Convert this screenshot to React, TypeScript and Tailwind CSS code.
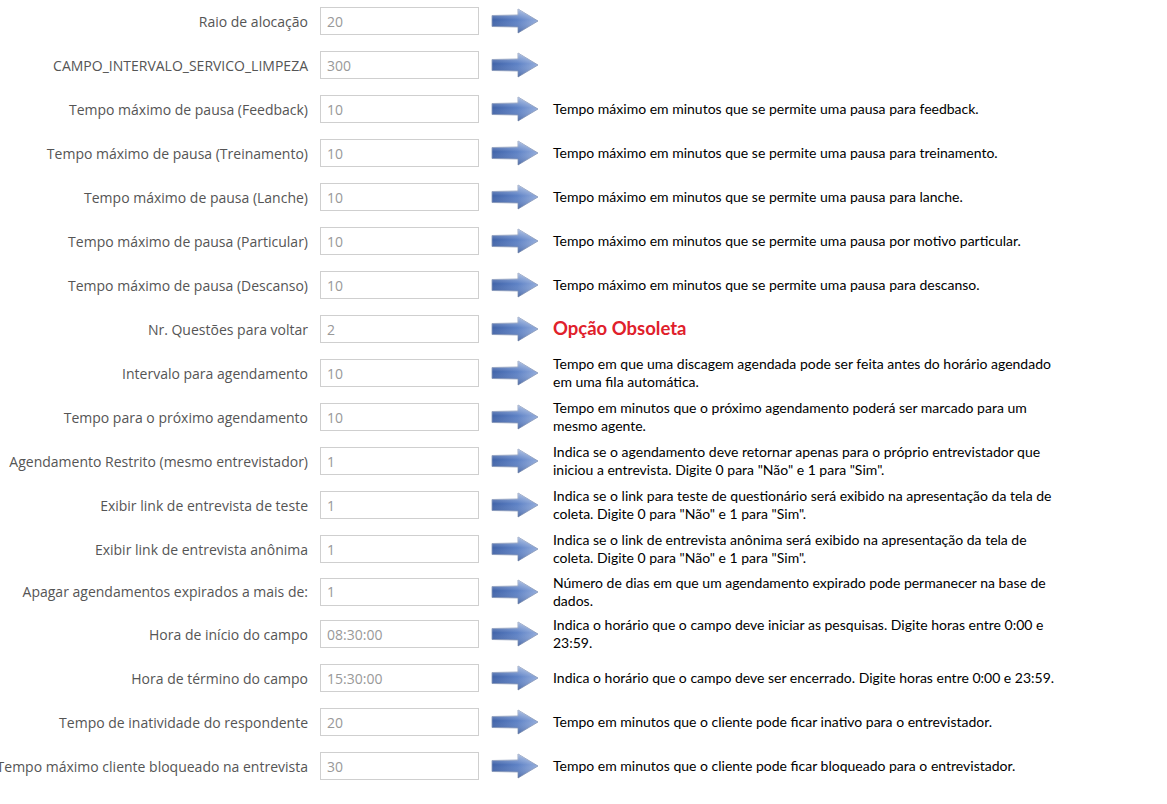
import React from "react";

type Row = {
  label: string;
  value: string;
  desc?: string[];
  obsolete?: boolean;
  h?: string;
};

const rows: Row[] = [
  { label: "Raio de alocação", value: "20" },
  { label: "CAMPO_INTERVALO_SERVICO_LIMPEZA", value: "300" },
  {
    label: "Tempo máximo de pausa (Feedback)",
    value: "10",
    desc: ["Tempo máximo em minutos que se permite uma pausa para feedback."],
  },
  {
    label: "Tempo máximo de pausa (Treinamento)",
    value: "10",
    desc: ["Tempo máximo em minutos que se permite uma pausa para treinamento."],
  },
  {
    label: "Tempo máximo de pausa (Lanche)",
    value: "10",
    desc: ["Tempo máximo em minutos que se permite uma pausa para lanche."],
  },
  {
    label: "Tempo máximo de pausa (Particular)",
    value: "10",
    desc: ["Tempo máximo em minutos que se permite uma pausa por motivo particular."],
  },
  {
    label: "Tempo máximo de pausa (Descanso)",
    value: "10",
    desc: ["Tempo máximo em minutos que se permite uma pausa para descanso."],
  },
  { label: "Nr. Questões para voltar", value: "2", obsolete: true },
  {
    label: "Intervalo para agendamento",
    value: "10",
    desc: [
      "Tempo em que uma discagem agendada pode ser feita antes do horário agendado",
      "em uma fila automática.",
    ],
  },
  {
    label: "Tempo para o próximo agendamento",
    value: "10",
    desc: [
      "Tempo em minutos que o próximo agendamento poderá ser marcado para um",
      "mesmo agente.",
    ],
  },
  {
    label: "Agendamento Restrito (mesmo entrevistador)",
    value: "1",
    desc: [
      "Indica se o agendamento deve retornar apenas para o próprio entrevistador que",
      'iniciou a entrevista. Digite 0 para "Não" e 1 para "Sim".',
    ],
  },
  {
    label: "Exibir link de entrevista de teste",
    value: "1",
    desc: [
      "Indica se o link para teste de questionário será exibido na apresentação da tela de",
      'coleta. Digite 0 para "Não" e 1 para "Sim".',
    ],
  },
  {
    label: "Exibir link de entrevista anônima",
    value: "1",
    desc: [
      "Indica se o link de entrevista anônima será exibido na apresentação da tela de",
      'coleta. Digite 0 para "Não" e 1 para "Sim".',
    ],
  },
  {
    label: "Apagar agendamentos expirados a mais de:",
    value: "1",
    h: "h-[41px]",
    desc: [
      "Número de dias em que um agendamento expirado pode permanecer na base de",
      "dados.",
    ],
  },
  {
    label: "Hora de início do campo",
    value: "08:30:00",
    desc: [
      "Indica o horário que o campo deve iniciar as pesquisas. Digite horas entre 0:00 e",
      "23:59.",
    ],
  },
  {
    label: "Hora de término do campo",
    value: "15:30:00",
    desc: ["Indica o horário que o campo deve ser encerrado. Digite horas entre 0:00 e 23:59."],
  },
  {
    label: "Tempo de inatividade do respondente",
    value: "20",
    desc: ["Tempo em minutos que o cliente pode ficar inativo para o entrevistador."],
  },
  {
    label: "Tempo máximo cliente bloqueado na entrevista",
    value: "30",
    desc: ["Tempo em minutos que o cliente pode ficar bloqueado para o entrevistador."],
  },
];

function Arrow({ id }: { id: number }) {
  return (
    <svg width="48" height="26" viewBox="0 0 48 26">
      <defs>
        <linearGradient id={`ah${id}`} x1="0" y1="0" x2="1" y2="0">
          <stop offset="0" stopColor="#3f62a8" />
          <stop offset="0.55" stopColor="#5d81c5" />
          <stop offset="1" stopColor="#93acdb" />
        </linearGradient>
        <linearGradient id={`av${id}`} x1="0" y1="0" x2="0" y2="1">
          <stop offset="0" stopColor="#ffffff" stopOpacity="0.5" />
          <stop offset="0.45" stopColor="#ffffff" stopOpacity="0" />
          <stop offset="1" stopColor="#1d2f5a" stopOpacity="0.3" />
        </linearGradient>
      </defs>
      <path
        d="M1 7.5 L27 7 L27 1 L47 13 L27 25 L27 19 L1 18.5 Z"
        fill={`url(#ah${id})`}
        stroke="#8797b8"
        strokeWidth="0.8"
        strokeLinejoin="round"
      />
      <path d="M1 7.5 L27 7 L27 1 L47 13 L27 25 L27 19 L1 18.5 Z" fill={`url(#av${id})`} />
    </svg>
  );
}

export default function App() {
  return (
    <div className="w-[1167px] min-h-[804px] bg-white overflow-hidden -mt-px">
      {rows.map((r, i) => (
        <div key={i} className={`flex items-center ${r.h ?? "h-[44px]"}`}>
          <div className="w-[308px] shrink-0 flex justify-end">
            <span className="whitespace-nowrap font-['Open_Sans',sans-serif] text-[14px] text-[#555]">
              {r.label}
            </span>
          </div>
          <div className="ml-[12px] w-[159px] h-[28px] shrink-0 border border-[#cfcfcf] bg-white flex items-center pl-[6px] font-['Open_Sans',sans-serif] text-[14px] text-[#999]">
            {r.value}
          </div>
          <div className="ml-[12px] shrink-0 flex items-center">
            <Arrow id={i} />
          </div>
          <div className="ml-[14px]">
            {r.obsolete ? (
              <span className="font-['Lato',sans-serif] font-bold text-[18.5px] text-[#e0202b]">
                Opção Obsoleta
              </span>
            ) : (
              r.desc && (
                <div className="font-['Lato',sans-serif] text-[14px] leading-[18px] text-black">
                  {r.desc.map((l, j) => (
                    <div key={j} className="whitespace-nowrap">
                      {l}
                    </div>
                  ))}
                </div>
              )
            )}
          </div>
        </div>
      ))}
    </div>
  );
}
